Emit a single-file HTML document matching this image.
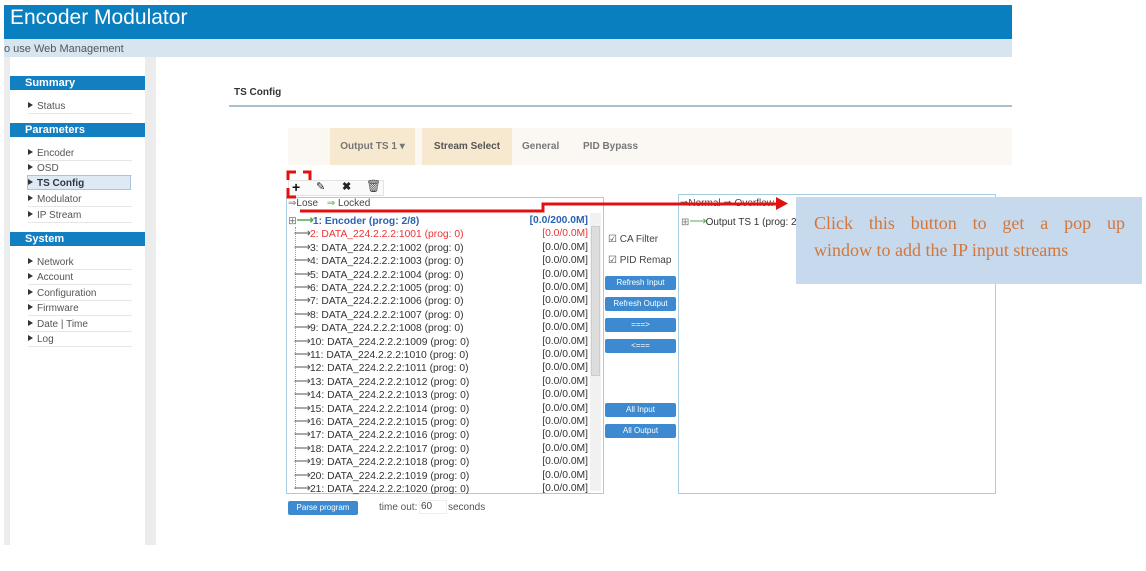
<!DOCTYPE html>
<html><head><meta charset="utf-8"><style>
*{margin:0;padding:0;box-sizing:border-box}
body{width:1146px;height:571px;background:#fff;position:relative;overflow:hidden;font-family:"Liberation Sans",Arial,sans-serif;color:#333}
.a{position:absolute}
.hdr{left:4px;top:5px;width:1008px;height:34px;background:#0a7fbf;color:#fff;font-size:21px;padding:1px 0 0 6px}
.sub{left:4px;top:39px;width:1008px;height:18px;background:#d7e5f1;font-size:11px;color:#555;padding:4px 0 0 0}
.side{left:4px;top:57px;width:152px;height:488px;background:#ececec}
.sidein{left:10px;top:57px;width:135px;height:488px;background:#fff}
.sh{left:10px;width:135px;height:14px;background:#127fc0;color:#fff;font-weight:bold;font-size:11px;padding:1px 0 0 15px}
.si{left:28px;width:104px;height:15px;border-bottom:1px solid #e6e6e6;font-size:10px;color:#555;padding-top:2px}
.si:before{content:"";display:inline-block;border-left:5px solid #333;border-top:3px solid transparent;border-bottom:3px solid transparent;margin-right:4px;vertical-align:1px}
.row{left:288px;width:306px;height:13.4px;font-size:10.3px;white-space:nowrap;line-height:13px}
.row .r{position:absolute;right:6px;top:0}
.ar{font-size:12px;color:#555;letter-spacing:-1px}
.btn{left:605px;width:71px;height:14px;background:#3d8ad0;color:#fff;font-size:8px;text-align:center;line-height:14px;border-radius:2px}
</style></head><body>
<div class="a hdr">Encoder Modulator</div>
<div class="a sub">o use Web Management</div>
<div class="a side"></div>
<div class="a sidein"></div>
<div class="a sh" style="top:76px">Summary</div>
<div class="a si" style="top:99px">Status</div>
<div class="a sh" style="top:123px">Parameters</div>
<div class="a si" style="top:146px">Encoder</div>
<div class="a si" style="top:161px">OSD</div>
<div class="a si" style="top:175px;left:27px;width:104px;background:#dde9f5;border:1px solid #a8c4de;font-weight:bold;color:#334">TS Config</div>
<div class="a si" style="top:192px">Modulator</div>
<div class="a si" style="top:208px">IP Stream</div>
<div class="a sh" style="top:232px">System</div>
<div class="a si" style="top:255px">Network</div>
<div class="a si" style="top:270px">Account</div>
<div class="a si" style="top:286px">Configuration</div>
<div class="a si" style="top:301px">Firmware</div>
<div class="a si" style="top:317px">Date | Time</div>
<div class="a si" style="top:332px">Log</div>

<div class="a" style="left:234px;top:87px;font-size:10px;font-weight:bold;color:#333">TS Config</div>
<div class="a" style="left:229px;top:105px;width:783px;height:2px;background:#a9c0cc"></div>

<div class="a" style="left:288px;top:128px;width:724px;height:37px;background:#fbf8f3"></div>
<div class="a" style="left:330px;top:128px;width:85px;height:37px;background:#f7e9cf;font-size:10px;font-weight:bold;color:#777;text-align:center;line-height:37px">Output TS 1 ▾</div>
<div class="a" style="left:422px;top:128px;width:90px;height:37px;background:#f7e9cf;font-size:10px;font-weight:bold;color:#555;text-align:center;line-height:37px">Stream Select</div>
<div class="a" style="left:522px;top:141px;font-size:10px;font-weight:bold;color:#777">General</div>
<div class="a" style="left:583px;top:141px;font-size:10px;font-weight:bold;color:#777">PID Bypass</div>

<div class="a" style="left:288px;top:180px;width:96px;height:16px;border:1px solid #e3e3e3;background:#fafafa"></div>
<div class="a" style="left:292px;top:179px;font-size:14px;font-weight:bold;color:#111">+</div>
<div class="a" style="left:316px;top:180px;font-size:11px;color:#222">✎</div>
<div class="a" style="left:342px;top:180px;font-size:11px;font-weight:bold;color:#222">✖</div>
<div class="a" style="left:366px;top:179px;font-size:12px;color:#444">🗑</div>

<div class="a" style="left:286px;top:197px;width:318px;height:297px;border:1px solid #a9cde0"></div>
<div class="a" style="left:288px;top:198px;font-size:10px;color:#444"><span style="color:#777">⇒</span>Lose <span style="color:#5a5;margin-left:6px">⇒</span> Locked</div>
<div class="a" style="left:590px;top:213px;width:11px;height:278px;background:#f1f1f1"></div>
<div class="a" style="left:591px;top:226px;width:9px;height:150px;background:#ddd;border:1px solid #ccc"></div>
<div class="a" style="left:295px;top:227px;width:1px;height:262px;border-left:1px dotted #999"></div>

<div class="a row" style="top:214px;color:#2a63b0;font-weight:bold"><span style="color:#777;font-weight:normal">⊞</span><span class="ar" style="color:#5a5">⟶</span>1: Encoder (prog: 2/8)<span class="r">[0.0/200.0M]</span></div>
<div class="a row" style="top:227.4px;color:#e33">&nbsp;&nbsp;<span class="ar">⟶</span>2: DATA_224.2.2.2:1001 (prog: 0)<span class="r">[0.0/0.0M]</span></div>
<div class="a row" style="top:240.8px">&nbsp;&nbsp;<span class="ar">⟶</span>3: DATA_224.2.2.2:1002 (prog: 0)<span class="r">[0.0/0.0M]</span></div>
<div class="a row" style="top:254.2px">&nbsp;&nbsp;<span class="ar">⟶</span>4: DATA_224.2.2.2:1003 (prog: 0)<span class="r">[0.0/0.0M]</span></div>
<div class="a row" style="top:267.6px">&nbsp;&nbsp;<span class="ar">⟶</span>5: DATA_224.2.2.2:1004 (prog: 0)<span class="r">[0.0/0.0M]</span></div>
<div class="a row" style="top:281px">&nbsp;&nbsp;<span class="ar">⟶</span>6: DATA_224.2.2.2:1005 (prog: 0)<span class="r">[0.0/0.0M]</span></div>
<div class="a row" style="top:294.4px">&nbsp;&nbsp;<span class="ar">⟶</span>7: DATA_224.2.2.2:1006 (prog: 0)<span class="r">[0.0/0.0M]</span></div>
<div class="a row" style="top:307.8px">&nbsp;&nbsp;<span class="ar">⟶</span>8: DATA_224.2.2.2:1007 (prog: 0)<span class="r">[0.0/0.0M]</span></div>
<div class="a row" style="top:321.2px">&nbsp;&nbsp;<span class="ar">⟶</span>9: DATA_224.2.2.2:1008 (prog: 0)<span class="r">[0.0/0.0M]</span></div>
<div class="a row" style="top:334.6px">&nbsp;&nbsp;<span class="ar">⟶</span>10: DATA_224.2.2.2:1009 (prog: 0)<span class="r">[0.0/0.0M]</span></div>
<div class="a row" style="top:348px">&nbsp;&nbsp;<span class="ar">⟶</span>11: DATA_224.2.2.2:1010 (prog: 0)<span class="r">[0.0/0.0M]</span></div>
<div class="a row" style="top:361.4px">&nbsp;&nbsp;<span class="ar">⟶</span>12: DATA_224.2.2.2:1011 (prog: 0)<span class="r">[0.0/0.0M]</span></div>
<div class="a row" style="top:374.8px">&nbsp;&nbsp;<span class="ar">⟶</span>13: DATA_224.2.2.2:1012 (prog: 0)<span class="r">[0.0/0.0M]</span></div>
<div class="a row" style="top:388.2px">&nbsp;&nbsp;<span class="ar">⟶</span>14: DATA_224.2.2.2:1013 (prog: 0)<span class="r">[0.0/0.0M]</span></div>
<div class="a row" style="top:401.6px">&nbsp;&nbsp;<span class="ar">⟶</span>15: DATA_224.2.2.2:1014 (prog: 0)<span class="r">[0.0/0.0M]</span></div>
<div class="a row" style="top:415px">&nbsp;&nbsp;<span class="ar">⟶</span>16: DATA_224.2.2.2:1015 (prog: 0)<span class="r">[0.0/0.0M]</span></div>
<div class="a row" style="top:428.4px">&nbsp;&nbsp;<span class="ar">⟶</span>17: DATA_224.2.2.2:1016 (prog: 0)<span class="r">[0.0/0.0M]</span></div>
<div class="a row" style="top:441.8px">&nbsp;&nbsp;<span class="ar">⟶</span>18: DATA_224.2.2.2:1017 (prog: 0)<span class="r">[0.0/0.0M]</span></div>
<div class="a row" style="top:455.2px">&nbsp;&nbsp;<span class="ar">⟶</span>19: DATA_224.2.2.2:1018 (prog: 0)<span class="r">[0.0/0.0M]</span></div>
<div class="a row" style="top:468.6px">&nbsp;&nbsp;<span class="ar">⟶</span>20: DATA_224.2.2.2:1019 (prog: 0)<span class="r">[0.0/0.0M]</span></div>
<div class="a row" style="top:482px">&nbsp;&nbsp;<span class="ar">⟶</span>21: DATA_224.2.2.2:1020 (prog: 0)<span class="r">[0.0/0.0M]</span></div>

<div class="a" style="left:608px;top:234px;font-size:10px;color:#444">☑ CA Filter</div>
<div class="a" style="left:608px;top:255px;font-size:10px;color:#444">☑ PID Remap</div>
<div class="a btn" style="top:276px">Refresh Input</div>
<div class="a btn" style="top:297px">Refresh Output</div>
<div class="a btn" style="top:318px">===&gt;</div>
<div class="a btn" style="top:339px">&lt;===</div>
<div class="a btn" style="top:403px">All Input</div>
<div class="a btn" style="top:424px">All Output</div>

<div class="a" style="left:678px;top:194px;width:318px;height:300px;border:1px solid #a9cde0"></div>
<div class="a" style="left:680px;top:198px;font-size:10px;color:#444">⇒Normal ⇒ Overflow</div>
<div class="a" style="left:681px;top:214px;font-size:10px;color:#333"><span style="color:#777">⊞</span><span class="ar" style="color:#5a5">⟶</span>Output TS 1 (prog: 2</div>

<div class="a" style="left:796px;top:197px;width:346px;height:87px;background:#c6d9ed"></div>
<div class="a" style="left:814px;top:210px;width:311px;font-family:'Liberation Serif',serif;font-size:18px;color:#d2773c;text-align:justify;text-align-last:justify;line-height:27px">Click this button to get a pop up</div>
<div class="a" style="left:814px;top:237px;font-family:'Liberation Serif',serif;font-size:18px;color:#d2773c;line-height:27px">window to add the IP input streams</div>

<div class="a" style="left:288px;top:501px;width:70px;height:14px;background:#3d8ad0;color:#fff;font-size:8px;text-align:center;line-height:14px;border-radius:2px">Parse program</div>
<div class="a" style="left:379px;top:502px;font-size:10px;color:#555">time out:</div>
<div class="a" style="left:419px;top:500px;width:28px;height:14px;border:1px solid #eee;font-size:10px;padding-left:1px;color:#444">60</div>
<div class="a" style="left:448px;top:502px;font-size:10px;color:#555">seconds</div>

<svg class="a" style="left:0;top:0" width="1146" height="571">
<g fill="none" stroke="#e41010" stroke-width="3">
<path d="M288 180V172H296M303 172H310V180M288 188V197H296"/>
<path d="M300 211H543V204H778"/>
</g>
<polygon points="776,197 788,203.5 776,210" fill="#e41010"/>
</svg>
</body></html>
